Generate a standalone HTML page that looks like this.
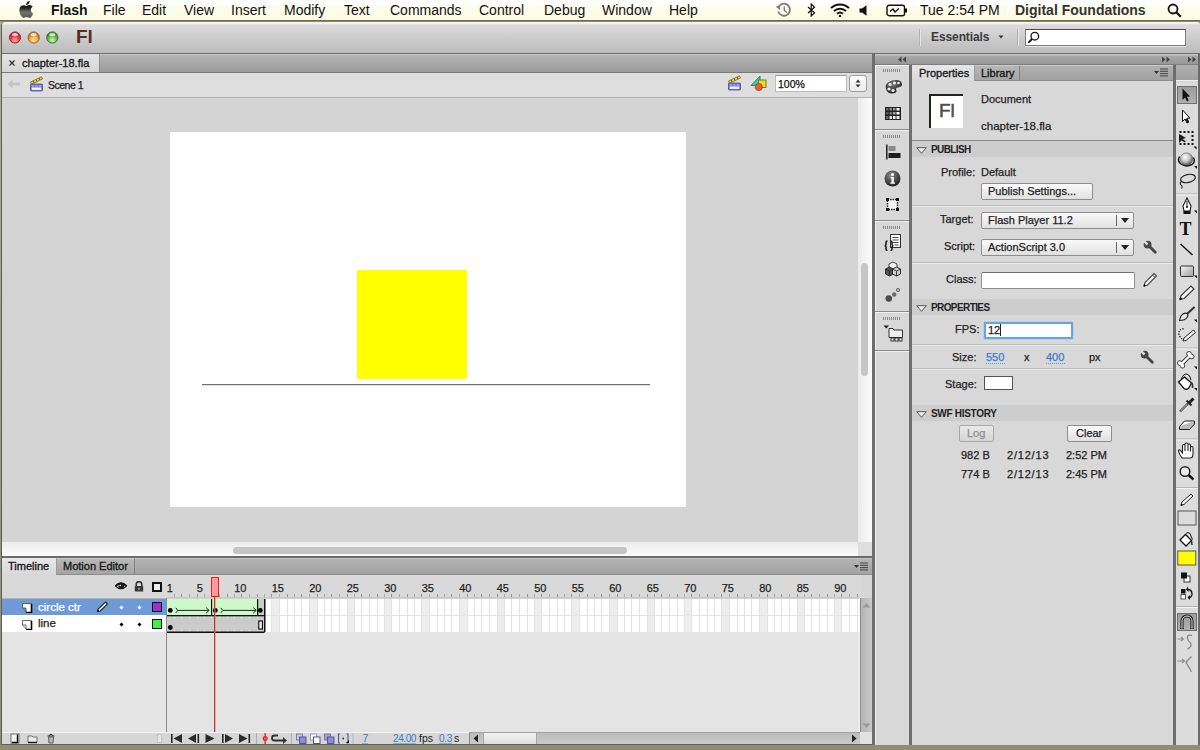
<!DOCTYPE html>
<html><head><meta charset="utf-8">
<style>
*{margin:0;padding:0;box-sizing:border-box}
html,body{width:1200px;height:750px;overflow:hidden}
body{position:relative;background:linear-gradient(#b3b192,#8f8d72);font-family:"Liberation Sans",sans-serif;color:#222}
.a{position:absolute}
.t{position:absolute;white-space:nowrap;line-height:1;-webkit-text-stroke:0.25px currentColor}
#menubar{left:0;top:0;width:1200px;height:21px;background:linear-gradient(#ffffff 0,#ffffff 18%,#fdfdec 35%,#fbfbe4 100%);border-bottom:1px solid #6e6a4e;box-shadow:0 1px 0 rgba(90,86,60,0.45)}
#menubar .m{position:absolute;top:2px;font-size:14px;color:#111;line-height:16px}
.light{position:absolute;width:12px;height:12px;border-radius:50%}
</style></head><body>
<!-- MENUBAR -->
<div id="menubar" class="a">
  <svg class="a" style="left:18.5px;top:1px" width="14.5" height="17" viewBox="0 0 814 1000"><defs><linearGradient id="gap" x1="0" y1="0" x2="0" y2="1"><stop offset="0" stop-color="#111"/><stop offset="0.4" stop-color="#222"/><stop offset="0.65" stop-color="#707070"/><stop offset="1" stop-color="#5a5a5a"/></linearGradient></defs><path fill="url(#gap)" d="M788.1 340.9c-5.8 4.5-108.2 62.2-108.2 190.5 0 148.4 130.3 200.9 134.2 202.2-.6 3.2-20.7 71.9-68.7 141.9-42.8 61.6-87.5 123.1-155.5 123.1s-85.5-39.5-164-39.5c-76.5 0-103.7 40.8-165.9 40.8s-105.6-57-155.5-127C46.7 790.7 0 663 0 541.8c0-194.4 126.4-297.5 250.8-297.5 66.1 0 121.2 43.4 162.7 43.4 39.5 0 101.1-46 176.3-46 28.5 0 130.9 2.600 198.3 99.2zm-234-181.5c31.1-36.9 53.1-88.1 53.1-139.3 0-7.1-.6-14.3-1.9-20.1-50.6 1.9-110.8 33.7-147.1 75.8-28.5 32.4-55.1 83.6-55.1 135.5 0 7.8 1.3 15.6 1.9 18.1 3.2.6 8.4 1.3 13.6 1.3 45.4 0 102.5-30.4 135.5-71.3z"/></svg>
  <div class="m" style="left:51px;font-weight:bold">Flash</div>
  <div class="m" style="left:103px">File</div>
  <div class="m" style="left:142px">Edit</div>
  <div class="m" style="left:184px">View</div>
  <div class="m" style="left:231px">Insert</div>
  <div class="m" style="left:284px">Modify</div>
  <div class="m" style="left:344px">Text</div>
  <div class="m" style="left:390px">Commands</div>
  <div class="m" style="left:479px">Control</div>
  <div class="m" style="left:544px">Debug</div>
  <div class="m" style="left:602px">Window</div>
  <div class="m" style="left:669px">Help</div>
  <div class="m" style="left:920px">Tue 2:54 PM</div>
  <div class="m" style="left:1015px;font-weight:bold;color:#333">Digital Foundations</div>
<svg class="a" style="left:775px;top:2px" width="17" height="16" viewBox="0 0 17 16"><path d="M3.2 9.5 A6 6 0 1 0 4.2 4" stroke="#7a7a7a" stroke-width="1.8" fill="none"/><path d="M0.8 4.8 L5.2 3 L5 8z" fill="#7a7a7a"/><path d="M9.3 4.5 V8.5 L12 10.5" stroke="#7a7a7a" stroke-width="1.4" fill="none"/></svg>
<svg class="a" style="left:807px;top:3px" width="9" height="14" viewBox="0 0 9 14"><path d="M1 4 L7.5 9.8 L4.2 13 V1 L7.5 4.2 L1 10" stroke="#111" stroke-width="1.2" fill="none" stroke-linejoin="miter"/></svg>
<svg class="a" style="left:830px;top:3px" width="20" height="14" viewBox="0 0 20 14"><path d="M1 5 A13 13 0 0 1 19 5" stroke="#111" stroke-width="2" fill="none"/><path d="M4 8 A9 9 0 0 1 16 8" stroke="#111" stroke-width="2" fill="none"/><path d="M7 10.8 A4.5 4.5 0 0 1 13 10.8" stroke="#111" stroke-width="2" fill="none"/><circle cx="10" cy="13" r="1.2" fill="#111"/></svg>
<svg class="a" style="left:859px;top:5px" width="9" height="11" viewBox="0 0 9 11"><path d="M0.5 3.5 H3 L7.5 0.2 V10.8 L3 7.5 H0.5z" fill="#111"/></svg>
<svg class="a" style="left:886px;top:4px" width="22" height="13" viewBox="0 0 22 13"><rect x="1" y="1.3" width="17.5" height="10.4" rx="2" fill="none" stroke="#111" stroke-width="1.4"/><rect x="19" y="4.5" width="2" height="4" fill="#111"/><path d="M4 7.5 L7 5 L9 8 L13 4.5" stroke="#111" stroke-width="1.4" fill="none"/></svg>
<svg class="a" style="left:1167px;top:3px" width="15" height="15" viewBox="0 0 15 15"><circle cx="6" cy="6" r="4.5" fill="none" stroke="#111" stroke-width="1.8"/><path d="M9.3 9.3 L13.8 13.8" stroke="#111" stroke-width="2.2"/></svg>

</div>
<!-- WINDOW FRAME -->
<div class="a" style="left:1px;top:22px;width:1199px;height:723px;background:#d6d6d6;border-left:1px solid #5c5c5c;border-bottom:1px solid #5c5c5c;border-radius:4px 4px 0 0"></div>
<!-- TITLEBAR -->
<div class="a" style="left:2px;top:22px;width:1198px;height:32px;background:linear-gradient(#f6f6f6 0,#f6f6f6 1px,#dcdcdc 3px,#c9c9c9 60%,#bcbcbc 100%);border-bottom:1px solid #6f6f6f;border-radius:4px 4px 0 0"></div>
<svg class="a" style="left:7px;top:29px" width="54" height="17" viewBox="0 0 54 17">
<defs>
<radialGradient id="lr" cx="50%" cy="75%" r="60%"><stop offset="0" stop-color="#ffb4b4"/><stop offset="0.6" stop-color="#f04048"/><stop offset="1" stop-color="#c0202a"/></radialGradient>
<radialGradient id="lo" cx="50%" cy="75%" r="60%"><stop offset="0" stop-color="#ffe8a8"/><stop offset="0.6" stop-color="#f2a83a"/><stop offset="1" stop-color="#c07818"/></radialGradient>
<radialGradient id="lg" cx="50%" cy="75%" r="60%"><stop offset="0" stop-color="#d4f8c0"/><stop offset="0.6" stop-color="#6cc050"/><stop offset="1" stop-color="#3a8a28"/></radialGradient>
</defs>
<circle cx="8" cy="8.5" r="5.6" fill="url(#lr)" stroke="#8c2a2a" stroke-width="0.9"/><ellipse cx="8" cy="5.6" rx="3" ry="1.6" fill="#fff" opacity="0.75"/>
<circle cx="26.7" cy="8.5" r="5.6" fill="url(#lo)" stroke="#8e5a1c" stroke-width="0.9"/><ellipse cx="26.7" cy="5.6" rx="3" ry="1.6" fill="#fff" opacity="0.75"/>
<circle cx="45.3" cy="8.5" r="5.6" fill="url(#lg)" stroke="#2e6a22" stroke-width="0.9"/><ellipse cx="45.3" cy="5.6" rx="3" ry="1.6" fill="#fff" opacity="0.75"/>
</svg>
<div class="t" style="left:76px;top:27px;font-size:19px;font-weight:bold;color:#5a2a26;-webkit-text-stroke:0">Fl</div>
<div class="a" style="left:919px;top:29px;width:1px;height:17px;background:#b2b2b2;box-shadow:1px 0 0 #e6e6e6"></div>
<div class="a" style="left:1017px;top:29px;width:1px;height:17px;background:#b2b2b2;box-shadow:1px 0 0 #e6e6e6"></div>
<div class="t" style="left:931px;top:31px;font-size:12px;font-weight:bold;color:#3a3a3a;letter-spacing:-0.1px;-webkit-text-stroke:0">Essentials</div>
<svg class="a" style="left:998px;top:35px" width="6" height="4" viewBox="0 0 6 4"><path d="M0.5 0.5 H5.5 L3 3.5z" fill="#333"/></svg>
<div class="a" style="left:1025px;top:29px;width:161px;height:17px;background:#fff;border:1px solid #7a7a7a;border-top-color:#4a4a4a;box-shadow:0 1px 0 rgba(255,255,255,0.6)"></div>
<svg class="a" style="left:1027px;top:31px" width="13" height="13" viewBox="0 0 13 13"><circle cx="7.8" cy="5.2" r="3.8" fill="none" stroke="#111" stroke-width="1.3"/><path d="M5 8 L1.2 11.8" stroke="#111" stroke-width="1.8"/></svg>


<!-- DOC TABS ROW -->
<div class="a" style="left:2px;top:54px;width:870px;height:19px;background:linear-gradient(#b4b4b4,#9c9c9c);border-bottom:1px solid #7a7a7a;border-top:1px solid #c8c8c8"></div>
<div class="a" style="left:2px;top:54px;width:98px;height:18px;background:linear-gradient(#e4e4e4,#d6d6d6);border-right:1px solid #8c8c8c"></div>
<svg class="a" style="left:9px;top:60px" width="6" height="6" viewBox="0 0 6 6"><path d="M0.5 0.5 L5.5 5.5 M5.5 0.5 L0.5 5.5" stroke="#333" stroke-width="1.2"/></svg>
<div class="t" style="left:22px;top:58px;font-size:11px;color:#1e1e1e;-webkit-text-stroke:0.35px #1e1e1e">chapter-18.fla</div>
<!-- SCENE BAR -->
<div class="a" style="left:2px;top:73px;width:870px;height:25px;background:#dedede;border-bottom:1px solid #b2b2b2"></div>
<svg class="a" style="left:7px;top:79px" width="14" height="10" viewBox="0 0 14 10"><path d="M5.5 0.5 L0.5 5 L5.5 9.5 V6.5 H13 V3.5 H5.5z" fill="#c4c4c4"/></svg>
<svg class="a" style="left:29px;top:76px" width="15" height="16" viewBox="0 0 15 16"><path d="M1.5 6 L12.5 0.8 L13.5 3 L2.5 8.2z" fill="#e8d830" stroke="#6a6010" stroke-width="0.7"/><path d="M4 4.8 L5 6.8 M7 3.4 L8 5.4 M10 2 L11 4" stroke="#444" stroke-width="0.9"/><rect x="1.5" y="8" width="12" height="7" rx="0.8" fill="#7a7ad0" stroke="#4a4a9a" stroke-width="0.8"/><rect x="2.8" y="11.5" width="9.4" height="2.4" fill="#f4f4ff"/><path d="M3 10 H5 M6.5 10 H8.5 M10 10 H12" stroke="#c8c8f0" stroke-width="0.9"/></svg>
<div class="t" style="left:48px;top:80px;font-size:10.5px;color:#1a1a1a;letter-spacing:-0.5px">Scene 1</div>
<svg class="a" style="left:727px;top:75px" width="15" height="16" viewBox="0 0 15 16"><path d="M1.5 6 L12.5 0.8 L13.5 3 L2.5 8.2z" fill="#e8d830" stroke="#6a6010" stroke-width="0.7"/><path d="M4 4.8 L5 6.8 M7 3.4 L8 5.4 M10 2 L11 4" stroke="#444" stroke-width="0.9"/><rect x="1.5" y="8" width="12" height="7" rx="0.8" fill="#7a7ad0" stroke="#4a4a9a" stroke-width="0.8"/><rect x="2.8" y="11.5" width="9.4" height="2.4" fill="#f4f4ff"/><path d="M3 10 H5 M6.5 10 H8.5 M10 10 H12" stroke="#c8c8f0" stroke-width="0.9"/></svg>
<svg class="a" style="left:750px;top:75px" width="17" height="16" viewBox="0 0 17 16"><path d="M1 10.5 L10 1.2 V10.5z" fill="#3cd0a0" stroke="#187860" stroke-width="0.9"/><rect x="8.5" y="5" width="7.5" height="7.5" fill="#e0e030" stroke="#707010" stroke-width="0.9"/><circle cx="8.8" cy="12" r="3.6" fill="#f05a28" stroke="#a83010" stroke-width="0.7"/></svg>
<div class="a" style="left:775px;top:75px;width:72px;height:17px;background:#fff;border:1px solid #bcbcbc;border-top-color:#9a9a9a"></div>
<div class="t" style="left:778px;top:79px;font-size:10.5px;color:#111">100%</div>
<div class="a" style="left:849px;top:75px;width:18px;height:17px;background:linear-gradient(#fdfdfd,#ececec);border:1px solid #9e9e9e;border-radius:3px"></div>
<svg class="a" style="left:855px;top:79px" width="6" height="9" viewBox="0 0 6 9"><path d="M0.5 3.5 L3 0.5 L5.5 3.5z M0.5 5.5 L3 8.5 L5.5 5.5z" fill="#333"/></svg>

<!-- STAGE AREA -->
<div class="a" style="left:2px;top:98px;width:856px;height:444px;background:#d4d4d4"></div>
<div class="a" style="left:170px;top:132px;width:516px;height:375px;background:#fff"></div>
<div class="a" style="left:357px;top:270px;width:110px;height:109px;background:#ffff00"></div>
<div class="a" style="left:202px;top:384px;width:448px;height:1px;background:#707070;box-shadow:0 1px 0 rgba(0,0,0,0.12)"></div>
<!-- stage scrollbars -->
<div class="a" style="left:858px;top:98px;width:14px;height:444px;background:linear-gradient(90deg,#ececec,#fbfbfb)"></div>
<div class="a" style="left:861px;top:263px;width:7px;height:113px;background:#c6c6c6;border-radius:4px"></div>
<div class="a" style="left:2px;top:542px;width:856px;height:14px;background:linear-gradient(#ececec,#fbfbfb)"></div>
<div class="a" style="left:233px;top:547px;width:394px;height:7px;background:#c4c4c4;border-radius:4px"></div>
<div class="a" style="left:858px;top:542px;width:14px;height:14px;background:#dedede"></div>
<div class="a" style="left:2px;top:556px;width:870px;height:2px;background:#6c6c6c"></div>

<!-- TIMELINE TABS -->
<div class="a" style="left:2px;top:558px;width:870px;height:17px;background:linear-gradient(#b4b4b4,#a2a2a2);border-bottom:1px solid #8e8e8e;border-top:1px solid #c6c6c6"></div>
<div class="a" style="left:2px;top:558px;width:54px;height:17px;background:linear-gradient(#e8e8e8,#d8d8d8)"></div>
<div class="a" style="left:56px;top:558px;width:79px;height:17px;background:linear-gradient(#b8b8b8,#a4a4a4);border-right:1px solid #828282;border-left:1px solid #9a9a9a;border-bottom:1px solid #8e8e8e;border-top:1px solid #cacaca"></div>
<div class="t" style="left:8px;top:561px;font-size:11px;color:#1a1a1a;-webkit-text-stroke:0.35px #1a1a1a">Timeline</div>
<div class="t" style="left:63px;top:561px;font-size:11px;color:#1a1a1a;-webkit-text-stroke:0.35px #1a1a1a">Motion Editor</div>
<svg class="a" style="left:854px;top:562px" width="15" height="9" viewBox="0 0 15 9"><path d="M0 3 L5 3 L2.5 6z" fill="#333"/><rect x="6" y="0.5" width="8" height="1" fill="#444"/><rect x="6" y="2.8" width="8" height="1" fill="#444"/><rect x="6" y="5.1" width="8" height="1" fill="#444"/><rect x="6" y="7.4" width="8" height="1" fill="#444"/></svg>
<!-- LAYER HEADER -->
<div class="a" style="left:2px;top:575px;width:165px;height:24px;background:#d8d8d8;border-bottom:1px solid #b9b3a8"></div>
<svg class="a" style="left:115px;top:582px" width="12" height="9" viewBox="0 0 12 9"><path d="M0.5 4 Q6 -1.5 11.5 4 Q6 9.5 0.5 4z" fill="#f0f0f0" stroke="#1a1a1a" stroke-width="1.1"/><path d="M0.5 4 Q6 -1.5 11.5 4" fill="none" stroke="#111" stroke-width="1.8"/><circle cx="6.3" cy="4.3" r="2.8" fill="#1a1a1a"/><circle cx="5.3" cy="3.5" r="0.8" fill="#fff"/></svg>
<svg class="a" style="left:134px;top:581px" width="10" height="11" viewBox="0 0 10 11"><path d="M2.2 5 V3.5 A2.8 2.8 0 0 1 7.8 3.5 V5" stroke="#333" stroke-width="1.5" fill="none"/><rect x="0.8" y="5" width="8.4" height="5.5" rx="0.5" fill="#3a3a3a"/><rect x="4.3" y="6.8" width="1.4" height="2.2" fill="#aaa"/></svg>
<div class="a" style="left:152px;top:582px;width:10px;height:10px;border:2px solid #111;background:#eee"></div>
<!-- LAYER ROWS -->
<div class="a" style="left:2px;top:599px;width:165px;height:16px;background:#6e9bd8"></div>
<div class="a" style="left:2px;top:615px;width:165px;height:17px;background:#ffffff"></div>
<div class="a" style="left:2px;top:632px;width:165px;height:100px;background:#e4e4e4"></div>
<svg class="a" style="left:22px;top:603px" width="11" height="10" viewBox="0 0 11 10"><path d="M0.5 0.5 H9.5 V9.5 H4 V5 H0.5z" fill="#fff" stroke="#444" stroke-width="0.8"/><path d="M9.5 1 V9.5 H4" stroke="#000" stroke-width="1.6" fill="none"/><path d="M0.5 5 L4 9" stroke="#666" stroke-width="0.8"/></svg>
<svg class="a" style="left:22px;top:620px" width="11" height="10" viewBox="0 0 11 10"><path d="M0.5 0.5 H9.5 V9.5 H4 V5 H0.5z" fill="#fff" stroke="#444" stroke-width="0.8"/><path d="M9.5 1 V9.5 H4" stroke="#000" stroke-width="1.6" fill="none"/><path d="M0.5 5 L4 9" stroke="#666" stroke-width="0.8"/></svg>
<div class="t" style="left:38px;top:602px;font-size:11.5px;color:#fff">circle ctr</div>
<div class="t" style="left:38px;top:618px;font-size:11.5px;color:#222">line</div>
<svg class="a" style="left:96px;top:601px" width="13" height="12" viewBox="0 0 13 12"><path d="M1.5 10.5 L2.2 8 L9.5 1 L11.5 3 L4.2 10z" fill="#f4f4f4" stroke="#222" stroke-width="1.1"/><path d="M1.5 10.5 L2.6 9.4" stroke="#000" stroke-width="1.5"/></svg>
<svg class="a" style="left:118px;top:604px" width="7" height="7" viewBox="0 0 7 7"><path d="M3.5 1.5 L5.5 3.5 L3.5 5.5 L1.5 3.5z" fill="#fff"/></svg>
<svg class="a" style="left:136px;top:604px" width="7" height="7" viewBox="0 0 7 7"><path d="M3.5 1.5 L5.5 3.5 L3.5 5.5 L1.5 3.5z" fill="#fff"/></svg>
<svg class="a" style="left:118px;top:621px" width="7" height="7" viewBox="0 0 7 7"><path d="M3.5 1.5 L5.5 3.5 L3.5 5.5 L1.5 3.5z" fill="#000"/></svg>
<svg class="a" style="left:136px;top:621px" width="7" height="7" viewBox="0 0 7 7"><path d="M3.5 1.5 L5.5 3.5 L3.5 5.5 L1.5 3.5z" fill="#000"/></svg>
<div class="a" style="left:152px;top:602px;width:10px;height:10px;border:1px solid #111;background:#9b30cf"></div>
<div class="a" style="left:152px;top:619px;width:10px;height:10px;border:1px solid #111;background:#44ee44"></div>
<div class="a" style="left:166px;top:598px;width:1px;height:146px;background:#8c8c8c"></div>
<!-- FRAMES -->
<svg class="a" style="left:167px;top:575px" width="694" height="157" viewBox="0 0 694 157" font-family="Liberation Sans"><rect x="0" y="0" width="694" height="23" fill="#d9d9d9"/><rect x="0" y="23.5" width="693" height="33.5" fill="#ffffff"/><rect x="30" y="23.5" width="8" height="33.5" fill="#ededed"/><rect x="67" y="23.5" width="8" height="33.5" fill="#ededed"/><rect x="104" y="23.5" width="8" height="33.5" fill="#ededed"/><rect x="142" y="23.5" width="8" height="33.5" fill="#ededed"/><rect x="180" y="23.5" width="8" height="33.5" fill="#ededed"/><rect x="217" y="23.5" width="8" height="33.5" fill="#ededed"/><rect x="254" y="23.5" width="8" height="33.5" fill="#ededed"/><rect x="292" y="23.5" width="8" height="33.5" fill="#ededed"/><rect x="330" y="23.5" width="8" height="33.5" fill="#ededed"/><rect x="367" y="23.5" width="8" height="33.5" fill="#ededed"/><rect x="404" y="23.5" width="8" height="33.5" fill="#ededed"/><rect x="442" y="23.5" width="8" height="33.5" fill="#ededed"/><rect x="480" y="23.5" width="8" height="33.5" fill="#ededed"/><rect x="517" y="23.5" width="8" height="33.5" fill="#ededed"/><rect x="554" y="23.5" width="8" height="33.5" fill="#ededed"/><rect x="592" y="23.5" width="8" height="33.5" fill="#ededed"/><rect x="630" y="23.5" width="8" height="33.5" fill="#ededed"/><rect x="667" y="23.5" width="8" height="33.5" fill="#ededed"/><rect x="7" y="23.5" width="1" height="33.5" fill="#e2e2e2"/><rect x="14" y="23.5" width="1" height="33.5" fill="#e2e2e2"/><rect x="22" y="23.5" width="1" height="33.5" fill="#e2e2e2"/><rect x="30" y="23.5" width="1" height="33.5" fill="#e2e2e2"/><rect x="37" y="23.5" width="1" height="33.5" fill="#e2e2e2"/><rect x="44" y="23.5" width="1" height="33.5" fill="#e2e2e2"/><rect x="52" y="23.5" width="1" height="33.5" fill="#e2e2e2"/><rect x="60" y="23.5" width="1" height="33.5" fill="#e2e2e2"/><rect x="67" y="23.5" width="1" height="33.5" fill="#e2e2e2"/><rect x="74" y="23.5" width="1" height="33.5" fill="#e2e2e2"/><rect x="82" y="23.5" width="1" height="33.5" fill="#e2e2e2"/><rect x="90" y="23.5" width="1" height="33.5" fill="#e2e2e2"/><rect x="97" y="23.5" width="1" height="33.5" fill="#e2e2e2"/><rect x="104" y="23.5" width="1" height="33.5" fill="#e2e2e2"/><rect x="112" y="23.5" width="1" height="33.5" fill="#e2e2e2"/><rect x="120" y="23.5" width="1" height="33.5" fill="#e2e2e2"/><rect x="127" y="23.5" width="1" height="33.5" fill="#e2e2e2"/><rect x="134" y="23.5" width="1" height="33.5" fill="#e2e2e2"/><rect x="142" y="23.5" width="1" height="33.5" fill="#e2e2e2"/><rect x="150" y="23.5" width="1" height="33.5" fill="#e2e2e2"/><rect x="157" y="23.5" width="1" height="33.5" fill="#e2e2e2"/><rect x="164" y="23.5" width="1" height="33.5" fill="#e2e2e2"/><rect x="172" y="23.5" width="1" height="33.5" fill="#e2e2e2"/><rect x="180" y="23.5" width="1" height="33.5" fill="#e2e2e2"/><rect x="187" y="23.5" width="1" height="33.5" fill="#e2e2e2"/><rect x="194" y="23.5" width="1" height="33.5" fill="#e2e2e2"/><rect x="202" y="23.5" width="1" height="33.5" fill="#e2e2e2"/><rect x="210" y="23.5" width="1" height="33.5" fill="#e2e2e2"/><rect x="217" y="23.5" width="1" height="33.5" fill="#e2e2e2"/><rect x="224" y="23.5" width="1" height="33.5" fill="#e2e2e2"/><rect x="232" y="23.5" width="1" height="33.5" fill="#e2e2e2"/><rect x="240" y="23.5" width="1" height="33.5" fill="#e2e2e2"/><rect x="247" y="23.5" width="1" height="33.5" fill="#e2e2e2"/><rect x="254" y="23.5" width="1" height="33.5" fill="#e2e2e2"/><rect x="262" y="23.5" width="1" height="33.5" fill="#e2e2e2"/><rect x="270" y="23.5" width="1" height="33.5" fill="#e2e2e2"/><rect x="277" y="23.5" width="1" height="33.5" fill="#e2e2e2"/><rect x="284" y="23.5" width="1" height="33.5" fill="#e2e2e2"/><rect x="292" y="23.5" width="1" height="33.5" fill="#e2e2e2"/><rect x="300" y="23.5" width="1" height="33.5" fill="#e2e2e2"/><rect x="307" y="23.5" width="1" height="33.5" fill="#e2e2e2"/><rect x="314" y="23.5" width="1" height="33.5" fill="#e2e2e2"/><rect x="322" y="23.5" width="1" height="33.5" fill="#e2e2e2"/><rect x="330" y="23.5" width="1" height="33.5" fill="#e2e2e2"/><rect x="337" y="23.5" width="1" height="33.5" fill="#e2e2e2"/><rect x="344" y="23.5" width="1" height="33.5" fill="#e2e2e2"/><rect x="352" y="23.5" width="1" height="33.5" fill="#e2e2e2"/><rect x="360" y="23.5" width="1" height="33.5" fill="#e2e2e2"/><rect x="367" y="23.5" width="1" height="33.5" fill="#e2e2e2"/><rect x="374" y="23.5" width="1" height="33.5" fill="#e2e2e2"/><rect x="382" y="23.5" width="1" height="33.5" fill="#e2e2e2"/><rect x="390" y="23.5" width="1" height="33.5" fill="#e2e2e2"/><rect x="397" y="23.5" width="1" height="33.5" fill="#e2e2e2"/><rect x="404" y="23.5" width="1" height="33.5" fill="#e2e2e2"/><rect x="412" y="23.5" width="1" height="33.5" fill="#e2e2e2"/><rect x="420" y="23.5" width="1" height="33.5" fill="#e2e2e2"/><rect x="427" y="23.5" width="1" height="33.5" fill="#e2e2e2"/><rect x="434" y="23.5" width="1" height="33.5" fill="#e2e2e2"/><rect x="442" y="23.5" width="1" height="33.5" fill="#e2e2e2"/><rect x="450" y="23.5" width="1" height="33.5" fill="#e2e2e2"/><rect x="457" y="23.5" width="1" height="33.5" fill="#e2e2e2"/><rect x="464" y="23.5" width="1" height="33.5" fill="#e2e2e2"/><rect x="472" y="23.5" width="1" height="33.5" fill="#e2e2e2"/><rect x="480" y="23.5" width="1" height="33.5" fill="#e2e2e2"/><rect x="487" y="23.5" width="1" height="33.5" fill="#e2e2e2"/><rect x="494" y="23.5" width="1" height="33.5" fill="#e2e2e2"/><rect x="502" y="23.5" width="1" height="33.5" fill="#e2e2e2"/><rect x="510" y="23.5" width="1" height="33.5" fill="#e2e2e2"/><rect x="517" y="23.5" width="1" height="33.5" fill="#e2e2e2"/><rect x="524" y="23.5" width="1" height="33.5" fill="#e2e2e2"/><rect x="532" y="23.5" width="1" height="33.5" fill="#e2e2e2"/><rect x="540" y="23.5" width="1" height="33.5" fill="#e2e2e2"/><rect x="547" y="23.5" width="1" height="33.5" fill="#e2e2e2"/><rect x="554" y="23.5" width="1" height="33.5" fill="#e2e2e2"/><rect x="562" y="23.5" width="1" height="33.5" fill="#e2e2e2"/><rect x="570" y="23.5" width="1" height="33.5" fill="#e2e2e2"/><rect x="577" y="23.5" width="1" height="33.5" fill="#e2e2e2"/><rect x="584" y="23.5" width="1" height="33.5" fill="#e2e2e2"/><rect x="592" y="23.5" width="1" height="33.5" fill="#e2e2e2"/><rect x="600" y="23.5" width="1" height="33.5" fill="#e2e2e2"/><rect x="607" y="23.5" width="1" height="33.5" fill="#e2e2e2"/><rect x="614" y="23.5" width="1" height="33.5" fill="#e2e2e2"/><rect x="622" y="23.5" width="1" height="33.5" fill="#e2e2e2"/><rect x="630" y="23.5" width="1" height="33.5" fill="#e2e2e2"/><rect x="637" y="23.5" width="1" height="33.5" fill="#e2e2e2"/><rect x="644" y="23.5" width="1" height="33.5" fill="#e2e2e2"/><rect x="652" y="23.5" width="1" height="33.5" fill="#e2e2e2"/><rect x="660" y="23.5" width="1" height="33.5" fill="#e2e2e2"/><rect x="667" y="23.5" width="1" height="33.5" fill="#e2e2e2"/><rect x="674" y="23.5" width="1" height="33.5" fill="#e2e2e2"/><rect x="682" y="23.5" width="1" height="33.5" fill="#e2e2e2"/><rect x="690" y="23.5" width="1" height="33.5" fill="#e2e2e2"/><rect x="0" y="40" width="693" height="1" fill="#e4e4e4"/><rect x="0" y="57" width="693" height="100" fill="#e4e4e4"/><rect x="7" y="19" width="1" height="3" fill="#8a8a8a" opacity="0.6"/><rect x="14" y="19" width="1" height="3" fill="#8a8a8a" opacity="0.9"/><rect x="22" y="19" width="1" height="3" fill="#8a8a8a" opacity="0.6"/><rect x="30" y="19" width="1" height="3" fill="#8a8a8a" opacity="0.9"/><rect x="37" y="19" width="1" height="3" fill="#8a8a8a" opacity="0.6"/><rect x="44" y="19" width="1" height="3" fill="#8a8a8a" opacity="0.9"/><rect x="52" y="19" width="1" height="3" fill="#8a8a8a" opacity="0.6"/><rect x="60" y="19" width="1" height="3" fill="#8a8a8a" opacity="0.9"/><rect x="67" y="19" width="1" height="3" fill="#8a8a8a" opacity="0.6"/><rect x="74" y="19" width="1" height="3" fill="#8a8a8a" opacity="0.9"/><rect x="82" y="19" width="1" height="3" fill="#8a8a8a" opacity="0.6"/><rect x="90" y="19" width="1" height="3" fill="#8a8a8a" opacity="0.9"/><rect x="97" y="19" width="1" height="3" fill="#8a8a8a" opacity="0.6"/><rect x="104" y="19" width="1" height="3" fill="#8a8a8a" opacity="0.9"/><rect x="112" y="19" width="1" height="3" fill="#8a8a8a" opacity="0.6"/><rect x="120" y="19" width="1" height="3" fill="#8a8a8a" opacity="0.9"/><rect x="127" y="19" width="1" height="3" fill="#8a8a8a" opacity="0.6"/><rect x="134" y="19" width="1" height="3" fill="#8a8a8a" opacity="0.9"/><rect x="142" y="19" width="1" height="3" fill="#8a8a8a" opacity="0.6"/><rect x="150" y="19" width="1" height="3" fill="#8a8a8a" opacity="0.9"/><rect x="157" y="19" width="1" height="3" fill="#8a8a8a" opacity="0.6"/><rect x="164" y="19" width="1" height="3" fill="#8a8a8a" opacity="0.9"/><rect x="172" y="19" width="1" height="3" fill="#8a8a8a" opacity="0.6"/><rect x="180" y="19" width="1" height="3" fill="#8a8a8a" opacity="0.9"/><rect x="187" y="19" width="1" height="3" fill="#8a8a8a" opacity="0.6"/><rect x="194" y="19" width="1" height="3" fill="#8a8a8a" opacity="0.9"/><rect x="202" y="19" width="1" height="3" fill="#8a8a8a" opacity="0.6"/><rect x="210" y="19" width="1" height="3" fill="#8a8a8a" opacity="0.9"/><rect x="217" y="19" width="1" height="3" fill="#8a8a8a" opacity="0.6"/><rect x="224" y="19" width="1" height="3" fill="#8a8a8a" opacity="0.9"/><rect x="232" y="19" width="1" height="3" fill="#8a8a8a" opacity="0.6"/><rect x="240" y="19" width="1" height="3" fill="#8a8a8a" opacity="0.9"/><rect x="247" y="19" width="1" height="3" fill="#8a8a8a" opacity="0.6"/><rect x="254" y="19" width="1" height="3" fill="#8a8a8a" opacity="0.9"/><rect x="262" y="19" width="1" height="3" fill="#8a8a8a" opacity="0.6"/><rect x="270" y="19" width="1" height="3" fill="#8a8a8a" opacity="0.9"/><rect x="277" y="19" width="1" height="3" fill="#8a8a8a" opacity="0.6"/><rect x="284" y="19" width="1" height="3" fill="#8a8a8a" opacity="0.9"/><rect x="292" y="19" width="1" height="3" fill="#8a8a8a" opacity="0.6"/><rect x="300" y="19" width="1" height="3" fill="#8a8a8a" opacity="0.9"/><rect x="307" y="19" width="1" height="3" fill="#8a8a8a" opacity="0.6"/><rect x="314" y="19" width="1" height="3" fill="#8a8a8a" opacity="0.9"/><rect x="322" y="19" width="1" height="3" fill="#8a8a8a" opacity="0.6"/><rect x="330" y="19" width="1" height="3" fill="#8a8a8a" opacity="0.9"/><rect x="337" y="19" width="1" height="3" fill="#8a8a8a" opacity="0.6"/><rect x="344" y="19" width="1" height="3" fill="#8a8a8a" opacity="0.9"/><rect x="352" y="19" width="1" height="3" fill="#8a8a8a" opacity="0.6"/><rect x="360" y="19" width="1" height="3" fill="#8a8a8a" opacity="0.9"/><rect x="367" y="19" width="1" height="3" fill="#8a8a8a" opacity="0.6"/><rect x="374" y="19" width="1" height="3" fill="#8a8a8a" opacity="0.9"/><rect x="382" y="19" width="1" height="3" fill="#8a8a8a" opacity="0.6"/><rect x="390" y="19" width="1" height="3" fill="#8a8a8a" opacity="0.9"/><rect x="397" y="19" width="1" height="3" fill="#8a8a8a" opacity="0.6"/><rect x="404" y="19" width="1" height="3" fill="#8a8a8a" opacity="0.9"/><rect x="412" y="19" width="1" height="3" fill="#8a8a8a" opacity="0.6"/><rect x="420" y="19" width="1" height="3" fill="#8a8a8a" opacity="0.9"/><rect x="427" y="19" width="1" height="3" fill="#8a8a8a" opacity="0.6"/><rect x="434" y="19" width="1" height="3" fill="#8a8a8a" opacity="0.9"/><rect x="442" y="19" width="1" height="3" fill="#8a8a8a" opacity="0.6"/><rect x="450" y="19" width="1" height="3" fill="#8a8a8a" opacity="0.9"/><rect x="457" y="19" width="1" height="3" fill="#8a8a8a" opacity="0.6"/><rect x="464" y="19" width="1" height="3" fill="#8a8a8a" opacity="0.9"/><rect x="472" y="19" width="1" height="3" fill="#8a8a8a" opacity="0.6"/><rect x="480" y="19" width="1" height="3" fill="#8a8a8a" opacity="0.9"/><rect x="487" y="19" width="1" height="3" fill="#8a8a8a" opacity="0.6"/><rect x="494" y="19" width="1" height="3" fill="#8a8a8a" opacity="0.9"/><rect x="502" y="19" width="1" height="3" fill="#8a8a8a" opacity="0.6"/><rect x="510" y="19" width="1" height="3" fill="#8a8a8a" opacity="0.9"/><rect x="517" y="19" width="1" height="3" fill="#8a8a8a" opacity="0.6"/><rect x="524" y="19" width="1" height="3" fill="#8a8a8a" opacity="0.9"/><rect x="532" y="19" width="1" height="3" fill="#8a8a8a" opacity="0.6"/><rect x="540" y="19" width="1" height="3" fill="#8a8a8a" opacity="0.9"/><rect x="547" y="19" width="1" height="3" fill="#8a8a8a" opacity="0.6"/><rect x="554" y="19" width="1" height="3" fill="#8a8a8a" opacity="0.9"/><rect x="562" y="19" width="1" height="3" fill="#8a8a8a" opacity="0.6"/><rect x="570" y="19" width="1" height="3" fill="#8a8a8a" opacity="0.9"/><rect x="577" y="19" width="1" height="3" fill="#8a8a8a" opacity="0.6"/><rect x="584" y="19" width="1" height="3" fill="#8a8a8a" opacity="0.9"/><rect x="592" y="19" width="1" height="3" fill="#8a8a8a" opacity="0.6"/><rect x="600" y="19" width="1" height="3" fill="#8a8a8a" opacity="0.9"/><rect x="607" y="19" width="1" height="3" fill="#8a8a8a" opacity="0.6"/><rect x="614" y="19" width="1" height="3" fill="#8a8a8a" opacity="0.9"/><rect x="622" y="19" width="1" height="3" fill="#8a8a8a" opacity="0.6"/><rect x="630" y="19" width="1" height="3" fill="#8a8a8a" opacity="0.9"/><rect x="637" y="19" width="1" height="3" fill="#8a8a8a" opacity="0.6"/><rect x="644" y="19" width="1" height="3" fill="#8a8a8a" opacity="0.9"/><rect x="652" y="19" width="1" height="3" fill="#8a8a8a" opacity="0.6"/><rect x="660" y="19" width="1" height="3" fill="#8a8a8a" opacity="0.9"/><rect x="667" y="19" width="1" height="3" fill="#8a8a8a" opacity="0.6"/><rect x="674" y="19" width="1" height="3" fill="#8a8a8a" opacity="0.9"/><rect x="682" y="19" width="1" height="3" fill="#8a8a8a" opacity="0.6"/><rect x="690" y="19" width="1" height="3" fill="#8a8a8a" opacity="0.9"/><rect x="0" y="22.5" width="693" height="1" fill="#b8b8b8"/><text x="-0.3" y="17" font-size="11" fill="#1e1e1e" stroke="#1e1e1e" stroke-width="0.25">1</text><text x="29.7" y="17" font-size="11" fill="#1e1e1e" stroke="#1e1e1e" stroke-width="0.25">5</text><text x="67.2" y="17" font-size="11" fill="#1e1e1e" stroke="#1e1e1e" stroke-width="0.25">10</text><text x="104.7" y="17" font-size="11" fill="#1e1e1e" stroke="#1e1e1e" stroke-width="0.25">15</text><text x="142.2" y="17" font-size="11" fill="#1e1e1e" stroke="#1e1e1e" stroke-width="0.25">20</text><text x="179.7" y="17" font-size="11" fill="#1e1e1e" stroke="#1e1e1e" stroke-width="0.25">25</text><text x="217.2" y="17" font-size="11" fill="#1e1e1e" stroke="#1e1e1e" stroke-width="0.25">30</text><text x="254.7" y="17" font-size="11" fill="#1e1e1e" stroke="#1e1e1e" stroke-width="0.25">35</text><text x="292.2" y="17" font-size="11" fill="#1e1e1e" stroke="#1e1e1e" stroke-width="0.25">40</text><text x="329.7" y="17" font-size="11" fill="#1e1e1e" stroke="#1e1e1e" stroke-width="0.25">45</text><text x="367.2" y="17" font-size="11" fill="#1e1e1e" stroke="#1e1e1e" stroke-width="0.25">50</text><text x="404.7" y="17" font-size="11" fill="#1e1e1e" stroke="#1e1e1e" stroke-width="0.25">55</text><text x="442.2" y="17" font-size="11" fill="#1e1e1e" stroke="#1e1e1e" stroke-width="0.25">60</text><text x="479.7" y="17" font-size="11" fill="#1e1e1e" stroke="#1e1e1e" stroke-width="0.25">65</text><text x="517.2" y="17" font-size="11" fill="#1e1e1e" stroke="#1e1e1e" stroke-width="0.25">70</text><text x="554.7" y="17" font-size="11" fill="#1e1e1e" stroke="#1e1e1e" stroke-width="0.25">75</text><text x="592.2" y="17" font-size="11" fill="#1e1e1e" stroke="#1e1e1e" stroke-width="0.25">80</text><text x="629.7" y="17" font-size="11" fill="#1e1e1e" stroke="#1e1e1e" stroke-width="0.25">85</text><text x="667.2" y="17" font-size="11" fill="#1e1e1e" stroke="#1e1e1e" stroke-width="0.25">90</text><rect x="0" y="24" width="90.0" height="16" fill="#cdf9c9"/><rect x="90.0" y="24" width="7.5" height="16" fill="#cccccc"/><rect x="0" y="41" width="97.5" height="16" fill="#cbcbcb"/><rect x="44" y="24" width="1.2" height="16" fill="#111"/><rect x="90" y="24" width="1.2" height="16" fill="#111"/><rect x="97" y="24" width="1.5" height="33" fill="#111"/><rect x="0" y="40" width="97.5" height="1.3" fill="#111"/><rect x="0" y="56.5" width="97.5" height="1.5" fill="#111"/><rect x="7" y="42" width="1" height="1" fill="#f4f4f4"/><rect x="7" y="55" width="1" height="1" fill="#f4f4f4"/><rect x="14" y="42" width="1" height="1" fill="#f4f4f4"/><rect x="14" y="55" width="1" height="1" fill="#f4f4f4"/><rect x="22" y="42" width="1" height="1" fill="#f4f4f4"/><rect x="22" y="55" width="1" height="1" fill="#f4f4f4"/><rect x="30" y="42" width="1" height="1" fill="#f4f4f4"/><rect x="30" y="55" width="1" height="1" fill="#f4f4f4"/><rect x="37" y="42" width="1" height="1" fill="#f4f4f4"/><rect x="37" y="55" width="1" height="1" fill="#f4f4f4"/><rect x="44" y="42" width="1" height="1" fill="#f4f4f4"/><rect x="44" y="55" width="1" height="1" fill="#f4f4f4"/><rect x="52" y="42" width="1" height="1" fill="#f4f4f4"/><rect x="52" y="55" width="1" height="1" fill="#f4f4f4"/><rect x="60" y="42" width="1" height="1" fill="#f4f4f4"/><rect x="60" y="55" width="1" height="1" fill="#f4f4f4"/><rect x="67" y="42" width="1" height="1" fill="#f4f4f4"/><rect x="67" y="55" width="1" height="1" fill="#f4f4f4"/><rect x="74" y="42" width="1" height="1" fill="#f4f4f4"/><rect x="74" y="55" width="1" height="1" fill="#f4f4f4"/><rect x="82" y="42" width="1" height="1" fill="#f4f4f4"/><rect x="82" y="55" width="1" height="1" fill="#f4f4f4"/><rect x="90" y="42" width="1" height="1" fill="#f4f4f4"/><rect x="90" y="55" width="1" height="1" fill="#f4f4f4"/><circle cx="3.3" cy="35.4" r="2.4" fill="#000"/><circle cx="48.3" cy="35.4" r="2.4" fill="#000"/><circle cx="93.3" cy="35.4" r="2.4" fill="#000"/><circle cx="3.3" cy="52.5" r="2.4" fill="#000"/><rect x="91.8" y="46" width="3.6" height="8" fill="#fff" stroke="#111" stroke-width="1.2"/><path d="M8.8 32.9 L10.8 35.4 L8.8 37.9 M10.8 35.4 L42.1 35.4 M39.1 32.6 L42.1 35.4 L39.1 38.199999999999996" stroke="#222" stroke-width="1" fill="none"/><path d="M53.8 32.9 L55.8 35.4 L53.8 37.9 M55.8 35.4 L89.2 35.4 M86.2 32.6 L89.2 35.4 L86.2 38.199999999999996" stroke="#222" stroke-width="1" fill="none"/></svg>
<!-- PLAYHEAD -->
<div class="a" style="left:211px;top:577px;width:8px;height:20px;background:#ff9a9a;border:1.5px solid #e02222"></div>
<div class="a" style="left:214px;top:597px;width:1px;height:135px;background:#d42a2a;box-shadow:1px 0 0 rgba(230,120,120,0.5)"></div>
<!-- TL V SCROLLBAR -->
<div class="a" style="left:859px;top:598px;width:1px;height:134px;background:#f6f6f6"></div>
<div class="a" style="left:860px;top:598px;width:12px;height:134px;background:linear-gradient(90deg,#b4b4b4,#cacaca);border-left:1px solid #8a8a8a"></div>
<svg class="a" style="left:862px;top:602px" width="9" height="6" viewBox="0 0 9 6"><path d="M0.5 5.5 L4.5 1 L8.5 5.5z" fill="#9a9a9a"/></svg>
<svg class="a" style="left:862px;top:723px" width="9" height="6" viewBox="0 0 9 6"><path d="M0.5 0.5 L4.5 5 L8.5 0.5z" fill="#9a9a9a"/></svg>
<!-- BOTTOM TOOLBAR -->
<div class="a" style="left:2px;top:732px;width:858px;height:12px;background:#d6d6d6;border-top:1px solid #f2f2f2"></div>
<div class="a" style="left:860px;top:732px;width:12px;height:12px;background:#e2e2e2"></div>
<svg class="a" style="left:10px;top:733px" width="48" height="11" viewBox="0 0 48 11"><rect x="1" y="1" width="8" height="9" fill="#f4f4f4" stroke="#555" stroke-width="0.8"/><path d="M7.5 1.5 V9.5 H2" stroke="#000" stroke-width="1.4" fill="none"/><path d="M18 3 H22 L23 4 H27 V9.5 H18z" fill="#eaeaea" stroke="#555" stroke-width="0.8"/><path d="M18 9.5 H27" stroke="#111" stroke-width="1.4"/><path d="M37.5 3 H44.5 M39 3 L40 1.5 H42 L43 3" stroke="#333" stroke-width="1" fill="#ddd"/><path d="M38.5 4 H43.5 L43 10 H39z" fill="#bbb" stroke="#444" stroke-width="0.8"/></svg>
<div class="a" style="left:157px;top:734px;width:5px;height:9px;background:#e6e6e6;border:1px solid #c4c4c4"></div>
<svg class="a" style="left:168px;top:733px" width="300" height="11" viewBox="0 0 300 11" font-family="Liberation Sans">
  <g fill="#2a2a2a">
    <rect x="3" y="1" width="1.6" height="9"/><path d="M14 1 L5.5 5.5 L14 10z"/>
    <path d="M28 1 L20 5.5 L28 10z"/><rect x="29.5" y="1" width="1.6" height="9"/>
    <path d="M37.5 1 L46.5 5.5 L37.5 10z"/>
    <rect x="54" y="1" width="1.6" height="9"/><path d="M57 1 L65 5.5 L57 10z"/>
    <path d="M71 1 L79.5 5.5 L71 10z"/><rect x="80.5" y="1" width="1.6" height="9"/>
  </g>
  <rect x="88" y="0" width="1" height="11" fill="#b0b0b0"/>
  <rect x="96.5" y="0" width="1.3" height="11" fill="#e02020"/><circle cx="97.2" cy="5.5" r="1.9" fill="none" stroke="#e02020" stroke-width="1.2"/>
  <path d="M110 2.5 H106.5 Q104 2.5 104 5 Q104 7.5 106.5 7.5 H116" stroke="#333" stroke-width="1.8" fill="none"/><path d="M115 4 L119 7.5 L115 11z" fill="#333"/>
  <rect x="123" y="0" width="1" height="11" fill="#b0b0b0"/>
  <rect x="128.5" y="1" width="6" height="6" fill="#c8c8e4" stroke="#6a6aa8" stroke-width="0.8"/><rect x="131.5" y="4" width="6.5" height="6.5" fill="#8e8ed0" stroke="#4e4e9a" stroke-width="0.9"/>
  <rect x="142.5" y="1" width="6" height="6" fill="#fff" stroke="#8a8ac0" stroke-width="0.8"/><rect x="145.5" y="4" width="6.5" height="6.5" fill="#fff" stroke="#4e4e9a" stroke-width="1"/>
  <rect x="156.5" y="1" width="6" height="6" fill="#a0a0d4" stroke="#6a6aa8" stroke-width="0.8"/><rect x="159.5" y="4" width="6.5" height="6.5" fill="#8e8ed0" stroke="#4e4e9a" stroke-width="0.9"/>
  <path d="M172 1 H170.5 V10 H172 M178.5 1 H180 V10 H178.5" stroke="#5a5aa0" stroke-width="1.2" fill="none"/><circle cx="175.2" cy="5.5" r="0.9" fill="#333"/><path d="M178 10 L181 7 V10z" fill="#111"/>
  <rect x="184.5" y="0" width="1" height="11" fill="#b8b8b8"/>
  <text x="194.5" y="9" font-size="10.5" fill="#3a7cc8">7</text>
  <rect x="194" y="10" width="6" height="1" fill="#6aa0d8" opacity="0.7"/>
  <text x="225" y="9" font-size="10" letter-spacing="-0.4" fill="#3a7cc8">24.00</text>
  <rect x="225" y="10" width="23" height="1" fill="#6aa0d8" opacity="0.7"/>
  <text x="251" y="9" font-size="10.5" fill="#222">fps</text>
  <text x="271" y="9" font-size="10" letter-spacing="-0.3" fill="#3a7cc8">0.3</text>
  <rect x="271" y="10" width="13" height="1" fill="#6aa0d8" opacity="0.7"/>
  <text x="286" y="9" font-size="10.5" fill="#222">s</text>
</svg>
<!-- TL H SCROLLBAR -->
<div class="a" style="left:469px;top:732px;width:391px;height:12px;background:linear-gradient(#bcbcbc,#cacaca);border-left:1px solid #8a8a8a;border-top:1px solid #a0a0a0"></div>
<div class="a" style="left:483px;top:733px;width:54px;height:11px;background:linear-gradient(#f2f2f2,#dedede);border-left:1px solid #a4a4a4;border-right:1px solid #a4a4a4"></div>
<svg class="a" style="left:472px;top:734px" width="8" height="9" viewBox="0 0 8 9"><path d="M6 0.5 L1.5 4.5 L6 8.5z" fill="#222"/></svg>
<svg class="a" style="left:850px;top:734px" width="8" height="9" viewBox="0 0 8 9"><path d="M2 0.5 L6.5 4.5 L2 8.5z" fill="#222"/></svg>

<!-- PANEL COLUMN FRAME -->
<div class="a" style="left:872px;top:54px;width:3px;height:691px;background:#6e6e6e"></div>
<div class="a" style="left:875px;top:54px;width:325px;height:11px;background:linear-gradient(#c4c4c4 0,#c4c4c4 1px,#a8a8a8 2px,#989898);border-bottom:1px solid #7e7e7e"></div>
<svg class="a" style="left:897px;top:56px" width="10" height="7" viewBox="0 0 10 7"><path d="M4.5 0.5 L1 3.5 L4.5 6.5z M9 0.5 L5.5 3.5 L9 6.5z" fill="#444"/></svg>
<svg class="a" style="left:1161px;top:56px" width="10" height="7" viewBox="0 0 10 7"><path d="M1 0.5 L4.5 3.5 L1 6.5z M5.5 0.5 L9 3.5 L5.5 6.5z" fill="#444"/></svg>
<svg class="a" style="left:1187px;top:56px" width="10" height="7" viewBox="0 0 10 7"><path d="M1 0.5 L4.5 3.5 L1 6.5z M5.5 0.5 L9 3.5 L5.5 6.5z" fill="#444"/></svg>
<!-- ICON COLUMN -->
<div class="a" style="left:875px;top:65px;width:34px;height:680px;background:#d8d8d8;border-left:1px solid #ececec"></div>
<div class="a" style="left:909px;top:65px;width:3px;height:680px;background:#6e6e6e"></div>
<div class="a" style="left:875px;top:65px;width:34px;height:1px;background:#f4f4f4"></div>
<div class="a" style="left:875px;top:129px;width:34px;height:2px;background:#8a8a8a;border-bottom:1px solid #f0f0f0"></div>
<div class="a" style="left:875px;top:220px;width:34px;height:2px;background:#8a8a8a;border-bottom:1px solid #f0f0f0"></div>
<div class="a" style="left:875px;top:311px;width:34px;height:2px;background:#8a8a8a;border-bottom:1px solid #f0f0f0"></div>
<div class="a" style="left:875px;top:350px;width:34px;height:2px;background:#8a8a8a;border-bottom:1px solid #f0f0f0"></div>
<div class="a" style="left:883px;top:69px;width:18px;height:3px;background:repeating-linear-gradient(90deg,#8a8a8a 0 1px,transparent 1px 2px)"></div>
<div class="a" style="left:883px;top:135px;width:18px;height:3px;background:repeating-linear-gradient(90deg,#8a8a8a 0 1px,transparent 1px 2px)"></div>
<div class="a" style="left:883px;top:226px;width:18px;height:3px;background:repeating-linear-gradient(90deg,#8a8a8a 0 1px,transparent 1px 2px)"></div>
<div class="a" style="left:883px;top:317px;width:18px;height:3px;background:repeating-linear-gradient(90deg,#8a8a8a 0 1px,transparent 1px 2px)"></div>
<!-- color palette -->
<svg class="a" style="left:884px;top:79px" width="19" height="16" viewBox="0 0 19 16"><defs><radialGradient id="gp" cx="40%" cy="30%" r="80%"><stop offset="0" stop-color="#777"/><stop offset="1" stop-color="#141414"/></radialGradient></defs><path d="M2 10 Q0 4 8 1.5 Q17 -0.5 18 5 Q18.5 8 14 8.5 Q11 9 12.5 11.5 Q13 14.5 8 14.5 Q3.5 14.5 2 10z" fill="url(#gp)"/><circle cx="6" cy="5.5" r="1.6" fill="#eee"/><circle cx="10.5" cy="4" r="1.6" fill="#eee"/><circle cx="14.5" cy="4" r="1.3" fill="#eee"/><circle cx="5" cy="10" r="1.6" fill="#eee"/><circle cx="9" cy="11.5" r="1.6" fill="#eee"/></svg>
<!-- swatches -->
<svg class="a" style="left:885px;top:107px" width="16" height="13" viewBox="0 0 16 13"><rect x="0" y="0" width="16" height="13" fill="#222"/><g fill="#666"><rect x="1" y="1" width="2.5" height="2.5"/><rect x="4.5" y="1" width="2.5" height="2.5" fill="#888"/><rect x="8" y="1" width="2.5" height="2.5" fill="#999"/><rect x="11.5" y="1" width="3" height="2.5" fill="#fff"/><rect x="1" y="5" width="2.5" height="2.5" fill="#555"/><rect x="4.5" y="5" width="2.5" height="2.5" fill="#777"/><rect x="8" y="5" width="2.5" height="2.5" fill="#aaa"/><rect x="11.5" y="5" width="3" height="2.5" fill="#fff"/><rect x="1" y="9" width="2.5" height="3" fill="#666"/><rect x="4.5" y="9" width="2.5" height="3" fill="#ddd"/><rect x="8" y="9" width="2.5" height="3" fill="#fff"/><rect x="11.5" y="9" width="3" height="3" fill="#eee"/></g></svg>
<!-- align -->
<svg class="a" style="left:885px;top:144px" width="16" height="16" viewBox="0 0 16 16"><rect x="1" y="0.5" width="1.5" height="15" fill="#222"/><rect x="3.5" y="2" width="7" height="5" fill="#8a8a8a"/><rect x="3.5" y="9" width="12" height="5" fill="#1e1e1e"/></svg>
<!-- info -->
<svg class="a" style="left:884px;top:170px" width="17" height="17" viewBox="0 0 17 17"><defs><radialGradient id="gi" cx="40%" cy="30%" r="75%"><stop offset="0" stop-color="#8a8a8a"/><stop offset="1" stop-color="#1a1a1a"/></radialGradient></defs><circle cx="8.5" cy="8.5" r="8" fill="url(#gi)"/><circle cx="8.5" cy="4.5" r="1.5" fill="#fff"/><path d="M6.5 7 H9.8 V12.5 H11 V13.8 H6.3 V12.5 H7.5 V8.3 H6.5z" fill="#fff"/></svg>
<!-- transform -->
<svg class="a" style="left:885px;top:197px" width="15" height="15" viewBox="0 0 15 15"><rect x="2.5" y="2.5" width="10" height="10" fill="#f4f4f4" stroke="#222" stroke-width="1.5" stroke-dasharray="1.5 1"/><g fill="#111"><rect x="1" y="1" width="3" height="3"/><rect x="11" y="1" width="3" height="3"/><rect x="1" y="11" width="3" height="3"/><rect x="11" y="11" width="3" height="3"/></g></svg>
<!-- code snippets -->
<svg class="a" style="left:884px;top:234px" width="18" height="17" viewBox="0 0 18 17" font-family="Liberation Sans"><rect x="6.5" y="0.5" width="10" height="13" fill="#fff" stroke="#333" stroke-width="1"/><path d="M8.5 3.5 H14.5 M8.5 6 H14.5 M8.5 8.5 H14.5 M10.5 11 H14.5" stroke="#444" stroke-width="1"/><path d="M3.5 7 Q2 7 2 8.5 V10.5 Q2 11.5 0.8 11.8 Q2 12.1 2 13.1 V15 Q2 16.5 3.5 16.5 M6.5 7 Q8 7 8 8.5 V10.5 Q8 11.5 9.2 11.8 Q8 12.1 8 13.1 V15 Q8 16.5 6.5 16.5" fill="none" stroke="#111" stroke-width="1.5"/></svg>
<!-- components -->
<svg class="a" style="left:885px;top:260px" width="16" height="17" viewBox="0 0 16 17"><path d="M4 4 L8 2 L12 4 L12 9 L8 11 L4 9z" fill="#f0f0f0" stroke="#333" stroke-width="0.9"/><path d="M0.5 9 L4.5 7 L8.5 9 L8.5 14 L4.5 16 L0.5 14z" fill="#555" stroke="#222" stroke-width="0.9"/><path d="M7.5 9 L11.5 7 L15.5 9 L15.5 14 L11.5 16 L7.5 14z" fill="#ccc" stroke="#222" stroke-width="0.9"/><path d="M0.5 9 L4.5 11 L8.5 9 M4.5 11 V16 M7.5 9 L11.5 11 L15.5 9 M11.5 11 V16" stroke="#222" stroke-width="0.8" fill="none"/></svg>
<!-- motion presets -->
<svg class="a" style="left:884px;top:286px" width="18" height="18" viewBox="0 0 18 18"><circle cx="4.8" cy="12.5" r="3.3" fill="#4e4e4e"/><circle cx="10.2" cy="8.5" r="2.2" fill="#6a6a6a"/><circle cx="14" cy="4" r="1.7" fill="#aaa" stroke="#555" stroke-width="0.7"/></svg>
<!-- project -->
<svg class="a" style="left:883px;top:325px" width="21" height="17" viewBox="0 0 21 17"><path d="M0.5 0.5 H6 L3.2 3.5z" fill="#222"/><path d="M6 3.5 H10 L11 5 H19.5 V12.5 H6z" fill="#eee" stroke="#333" stroke-width="1"/><g fill="#fff" stroke="#222" stroke-width="0.9"><rect x="8" y="13" width="3" height="3"/><rect x="12" y="13" width="3" height="3"/><rect x="16" y="13" width="3" height="3"/></g></svg>

<!-- PROPERTIES PANEL -->
<div class="a" style="left:912px;top:65px;width:261px;height:17px;background:linear-gradient(#b0b0b0,#a0a0a0);border-top:1px solid #c8c8c8;border-bottom:1px solid #f0f0f0;box-shadow:inset 0 -1px 0 #8e8e8e"></div>
<div class="a" style="left:912px;top:65px;width:62px;height:17px;background:linear-gradient(#e6e6e6,#d8d8d8)"></div>
<div class="a" style="left:974px;top:65px;width:46px;height:16px;background:linear-gradient(#b6b6b6,#a6a6a6);border-right:1px solid #828282;border-left:1px solid #9a9a9a;border-bottom:1px solid #8e8e8e;border-top:1px solid #cacaca"></div>
<div class="t" style="left:919px;top:68px;font-size:11px;color:#1a1a1a;-webkit-text-stroke:0.35px #1a1a1a">Properties</div>
<div class="t" style="left:981px;top:68px;font-size:11px;color:#1a1a1a;-webkit-text-stroke:0.35px #1a1a1a">Library</div>
<svg class="a" style="left:1154px;top:68px" width="15" height="9" viewBox="0 0 15 9"><path d="M0 3 L5 3 L2.5 6z" fill="#333"/><rect x="6" y="0.5" width="8" height="1" fill="#444"/><rect x="6" y="2.8" width="8" height="1" fill="#444"/><rect x="6" y="5.1" width="8" height="1" fill="#444"/><rect x="6" y="7.4" width="8" height="1" fill="#444"/></svg>
<div class="a" style="left:912px;top:81px;width:261px;height:664px;background:#d8d8d8"></div>
<!-- doc header -->
<div class="a" style="left:929px;top:94px;width:34px;height:34px;background:#fff;border-left:2px solid #222;border-top:2px solid #222"></div>
<div class="t" style="left:939px;top:101px;font-size:19px;color:#4e4e4e;-webkit-text-stroke:0.5px #4e4e4e">Fl</div>
<div class="t" style="left:981px;top:94px;font-size:11px;color:#222">Document</div>
<div class="t" style="left:981px;top:121px;font-size:11.5px;color:#222">chapter-18.fla</div>
<div class="a" style="left:912px;top:140px;width:261px;height:1px;background:#8c8c8c"></div>
<!-- PUBLISH -->
<div class="a" style="left:912px;top:141px;width:261px;height:16px;background:#cdcdcd"></div>
<svg class="a" style="left:916px;top:147px" width="11" height="7" viewBox="0 0 11 7"><path d="M0.7 0.7 H10.3 L5.5 6.3z" fill="#eee" stroke="#555" stroke-width="1"/></svg>
<div class="t" style="left:931px;top:145px;font-size:10px;font-weight:bold;color:#222;letter-spacing:-0.6px;-webkit-text-stroke:0">PUBLISH</div>
<div class="t" style="left:941px;top:167px;font-size:11px;color:#222">Profile:</div>
<div class="t" style="left:981px;top:167px;font-size:11px;color:#222">Default</div>
<div class="a" style="left:981px;top:183px;width:112px;height:17px;background:linear-gradient(#fafafa,#e2e2e2);border:1px solid #8e8e8e;border-radius:2px"></div>
<div class="t" style="left:988px;top:186px;font-size:11px;color:#222">Publish Settings...</div>
<div class="a" style="left:912px;top:205px;width:261px;height:1px;background:#bdbdbd;box-shadow:0 1px 0 #ececec"></div>
<div class="t" style="left:940px;top:214px;font-size:11px;color:#222">Target:</div>
<div class="a" style="left:981px;top:212px;width:153px;height:17px;background:linear-gradient(#fafafa,#e0e0e0);border:1px solid #8e8e8e;border-radius:2px"></div>
<div class="t" style="left:988px;top:215px;font-size:11px;color:#222">Flash Player 11.2</div>
<div class="a" style="left:1116px;top:215px;width:1px;height:11px;background:#666"></div>
<svg class="a" style="left:1121px;top:218px" width="8" height="5" viewBox="0 0 8 5"><path d="M0 0 H8 L4 5z" fill="#222"/></svg>
<div class="t" style="left:944px;top:241px;font-size:11px;color:#222">Script:</div>
<div class="a" style="left:981px;top:239px;width:153px;height:17px;background:linear-gradient(#fafafa,#e0e0e0);border:1px solid #8e8e8e;border-radius:2px"></div>
<div class="t" style="left:988px;top:242px;font-size:11px;color:#222">ActionScript 3.0</div>
<div class="a" style="left:1116px;top:242px;width:1px;height:11px;background:#666"></div>
<svg class="a" style="left:1121px;top:245px" width="8" height="5" viewBox="0 0 8 5"><path d="M0 0 H8 L4 5z" fill="#222"/></svg>
<svg class="a" style="left:1143px;top:240px" width="14" height="14" viewBox="0 0 14 14"><circle cx="4.6" cy="4.6" r="3.9" fill="#464646"/><path d="M0.8 0.8 L4.4 4.4" stroke="#d8d8d8" stroke-width="2.6"/><circle cx="4.4" cy="4.4" r="1" fill="#d8d8d8"/><path d="M5.5 5.5 L12.3 12.3" stroke="#464646" stroke-width="2.8" stroke-linecap="round"/></svg>
<div class="a" style="left:912px;top:262px;width:261px;height:1px;background:#bdbdbd;box-shadow:0 1px 0 #ececec"></div>
<div class="t" style="left:946px;top:274px;font-size:11px;color:#222">Class:</div>
<div class="a" style="left:981px;top:272px;width:154px;height:17px;background:#fff;border:1px solid #8e8e8e;border-top-color:#6e6e6e;border-radius:2px"></div>
<svg class="a" style="left:1142px;top:272px" width="16" height="16" viewBox="0 0 16 16"><path d="M2 14 L3 10.5 L12 1.5 L14.5 4 L5.5 13z" fill="#f6f6f6" stroke="#444" stroke-width="1.1"/><path d="M2 14 L3.2 12.8" stroke="#000" stroke-width="1.8"/><path d="M10.5 3 L13 5.5" stroke="#555" stroke-width="1"/></svg>
<!-- PROPERTIES -->
<div class="a" style="left:912px;top:299px;width:261px;height:16px;background:#cdcdcd"></div>
<svg class="a" style="left:916px;top:305px" width="11" height="7" viewBox="0 0 11 7"><path d="M0.7 0.7 H10.3 L5.5 6.3z" fill="#eee" stroke="#555" stroke-width="1"/></svg>
<div class="t" style="left:931px;top:303px;font-size:10px;font-weight:bold;color:#222;letter-spacing:-0.6px;-webkit-text-stroke:0">PROPERTIES</div>
<div class="t" style="left:955px;top:324px;font-size:11px;color:#222">FPS:</div>
<div class="a" style="left:984px;top:322px;width:89px;height:17px;background:#fff;border:2px solid #6aa4e0;border-radius:1px;box-shadow:0 0 0 0.5px #9cc4ec"></div>
<div class="t" style="left:988px;top:325px;font-size:11px;color:#222">12</div>
<div class="a" style="left:1000px;top:324px;width:1px;height:12px;background:#222"></div>
<div class="a" style="left:912px;top:344px;width:261px;height:1px;background:#bdbdbd;box-shadow:0 1px 0 #ececec"></div>
<div class="t" style="left:952px;top:352px;font-size:11px;color:#222">Size:</div>
<div class="t" style="left:986px;top:352px;font-size:11px;color:#3a7cc8">550</div>
<div class="a" style="left:986px;top:363px;width:20px;height:1px;background:repeating-linear-gradient(90deg,#5a9ad8 0 1px,transparent 1px 2px)"></div>
<div class="t" style="left:1024px;top:352px;font-size:11px;color:#222">x</div>
<div class="t" style="left:1046px;top:352px;font-size:11px;color:#3a7cc8">400</div>
<div class="a" style="left:1046px;top:363px;width:20px;height:1px;background:repeating-linear-gradient(90deg,#5a9ad8 0 1px,transparent 1px 2px)"></div>
<div class="t" style="left:1089px;top:352px;font-size:11px;color:#222">px</div>
<svg class="a" style="left:1140px;top:350px" width="14" height="14" viewBox="0 0 14 14"><circle cx="4.6" cy="4.6" r="3.9" fill="#464646"/><path d="M0.8 0.8 L4.4 4.4" stroke="#d8d8d8" stroke-width="2.6"/><circle cx="4.4" cy="4.4" r="1" fill="#d8d8d8"/><path d="M5.5 5.5 L12.3 12.3" stroke="#464646" stroke-width="2.8" stroke-linecap="round"/></svg>
<div class="a" style="left:912px;top:368px;width:261px;height:1px;background:#bdbdbd;box-shadow:0 1px 0 #ececec"></div>
<div class="t" style="left:945px;top:379px;font-size:11px;color:#222">Stage:</div>
<div class="a" style="left:984px;top:376px;width:29px;height:14px;background:#fff;border:1px solid #555"></div>
<!-- SWF HISTORY -->
<div class="a" style="left:912px;top:405px;width:261px;height:16px;background:#cdcdcd"></div>
<svg class="a" style="left:916px;top:411px" width="11" height="7" viewBox="0 0 11 7"><path d="M0.7 0.7 H10.3 L5.5 6.3z" fill="#eee" stroke="#555" stroke-width="1"/></svg>
<div class="t" style="left:931px;top:409px;font-size:10px;font-weight:bold;color:#222;letter-spacing:-0.3px;-webkit-text-stroke:0">SWF HISTORY</div>
<div class="a" style="left:959px;top:425px;width:35px;height:17px;background:linear-gradient(#e8e8e8,#d6d6d6);border:1px solid #a8a8a8;border-radius:2px"></div>
<div class="t" style="left:967px;top:428px;font-size:11px;color:#8e8e8e">Log</div>
<div class="a" style="left:1067px;top:425px;width:45px;height:17px;background:linear-gradient(#fafafa,#e0e0e0);border:1px solid #8e8e8e;border-radius:2px"></div>
<div class="t" style="left:1076px;top:428px;font-size:11px;color:#222">Clear</div>
<div class="t" style="left:961px;top:450px;font-size:11px;color:#222">982 B</div>
<div class="t" style="left:1007px;top:450px;font-size:11px;color:#222;letter-spacing:0.8px">2/12/13</div>
<div class="t" style="left:1066px;top:450px;font-size:11px;color:#222">2:52 PM</div>
<div class="t" style="left:961px;top:469px;font-size:11px;color:#222">774 B</div>
<div class="t" style="left:1007px;top:469px;font-size:11px;color:#222;letter-spacing:0.8px">2/12/13</div>
<div class="t" style="left:1066px;top:469px;font-size:11px;color:#222">2:45 PM</div>

<!-- TOOLS -->
<div class="a" style="left:1173px;top:65px;width:3px;height:680px;background:#6e6e6e"></div>
<div class="a" style="left:1176px;top:65px;width:22px;height:16px;background:linear-gradient(#b0b0b0,#a0a0a0);border-bottom:1px solid #f0f0f0"></div>
<div class="a" style="left:1176px;top:82px;width:22px;height:663px;background:#dcdcdc"></div>
<div class="a" style="left:1198px;top:54px;width:2px;height:691px;background:#6a6a6a"></div>
<svg class="a" style="left:1176px;top:82px" width="22" height="600" viewBox="0 0 22 600">
<defs>
<linearGradient id="gsel" x1="0" y1="0" x2="0" y2="1"><stop offset="0" stop-color="#9c9c9c"/><stop offset="1" stop-color="#b0b0b0"/></linearGradient>
<radialGradient id="gsph" cx="40%" cy="35%" r="70%"><stop offset="0" stop-color="#ffffff"/><stop offset="0.5" stop-color="#c4c4c4"/><stop offset="1" stop-color="#505050"/></radialGradient>
<linearGradient id="grect" x1="0" y1="0" x2="1" y2="1"><stop offset="0" stop-color="#fafafa"/><stop offset="1" stop-color="#9a9a9a"/></linearGradient>
</defs>
<!-- separators (y local = page-82) -->
<g fill="#b4b4b4"><rect x="0" y="111.5" width="22" height="1"/><rect x="0" y="265.5" width="22" height="1"/><rect x="0" y="356.5" width="22" height="1"/><rect x="0" y="405" width="22" height="1"/><rect x="0" y="524" width="22" height="1"/></g>
<g fill="#f4f4f4"><rect x="0" y="112.5" width="22" height="1"/><rect x="0" y="266.5" width="22" height="1"/><rect x="0" y="357.5" width="22" height="1"/><rect x="0" y="406" width="22" height="1"/><rect x="0" y="525" width="22" height="1"/></g>
<!-- 1 selection (selected) -->
<rect x="1.5" y="4.5" width="19" height="17" fill="url(#gsel)" stroke="#6e6e6e" stroke-width="1"/>
<path d="M6.5 6.5 L6.5 18 L9 15.5 L11 19.5 L12.8 18.6 L10.8 14.8 L14 14.6z" fill="#111"/>
<!-- 2 subselection -->
<path d="M6.5 28 L6.5 39.5 L9 37 L11 41 L12.8 40.1 L10.8 36.3 L14 36.1z" fill="#fff" stroke="#111" stroke-width="1"/>
<path d="M9.5 37.5 L11 41 L12.8 40.1 L11.2 36.8z" fill="#111"/>
<!-- 3 free transform -->
<g fill="#111"><rect x="3.5" y="49" width="2" height="2"/><rect x="7.5" y="49" width="2" height="2"/><rect x="11.5" y="49" width="2" height="2"/><rect x="15.5" y="49" width="2" height="2"/><rect x="15.5" y="53" width="2" height="2"/><rect x="15.5" y="57" width="2" height="2"/><rect x="15.5" y="61" width="2" height="2"/><rect x="11.5" y="61" width="2" height="2"/><rect x="7.5" y="61" width="2" height="2"/><rect x="3.5" y="61" width="2" height="2"/><rect x="3.5" y="53" width="2" height="2"/></g>
<path d="M3 52 L3 61 L5.5 58.5 L9 60.5 L9.5 59 L6.5 57 L10 56z" fill="#1a1a1a"/>
<path d="M17.5 64.5 L20.5 64.5 L20.5 67.5z" fill="#111"/>
<!-- 4 3D rotation -->
<circle cx="10.5" cy="77" r="6.2" fill="url(#gsph)" stroke="#555" stroke-width="0.5"/>
<path d="M3.5 74.5 Q1 79 5 82 Q10 85.5 16 82.5 Q19.5 80 17.5 75.5" fill="none" stroke="#1a1a1a" stroke-width="1.5"/>
<path d="M18 84 L21 84 L21 87z" fill="#111"/>
<!-- 5 lasso -->
<ellipse cx="12" cy="96.5" rx="7.5" ry="4" fill="none" stroke="#222" stroke-width="1.2" transform="rotate(-12 12 96.5)"/>
<path d="M6 99 Q3 101 5 103 Q7 104.5 5.5 106.5" stroke="#222" stroke-width="1.1" fill="none"/>
<!-- 6 pen -->
<path d="M11 116 L7 124 L8 129 H14 L15 124z" fill="#fff" stroke="#111" stroke-width="1.1"/>
<path d="M11 119 V125" stroke="#111" stroke-width="1"/><circle cx="11" cy="125" r="1" fill="#111"/>
<rect x="7.5" y="129" width="7" height="3" fill="#111"/>
<path d="M18 128.5 L21 128.5 L21 131.5z" fill="#111"/>
<!-- 7 text -->
<text x="3.5" y="152.5" font-family="Liberation Serif" font-size="18" font-weight="bold" fill="#111">T</text>
<!-- 8 line -->
<path d="M4.5 162 L16.5 173" stroke="#111" stroke-width="1.4"/>
<!-- 9 rect -->
<rect x="4.5" y="184" width="13" height="10.5" rx="1" fill="url(#grect)" stroke="#333" stroke-width="1"/>
<path d="M18 193.5 L21 193.5 L21 196.5z" fill="#111"/>
<!-- 10 pencil -->
<path d="M4 217.5 L5 213.5 L15 204 L18 207 L8.2 216.5z" fill="#f2f2f2" stroke="#333" stroke-width="1.1"/>
<path d="M4 217.5 L5.5 216" stroke="#000" stroke-width="1.8"/>
<!-- 11 brush -->
<path d="M18.5 225 L11 232" stroke="#333" stroke-width="2"/>
<path d="M11.5 231.5 Q7.5 230 5 234 Q4 236.5 3.5 238.5 Q9 238.5 11 235.5 Q12.5 233.5 11.5 231.5z" fill="#e8e8e8" stroke="#222" stroke-width="1.1"/>
<path d="M18 237.5 L21 237.5 L21 240.5z" fill="#111"/>
<!-- 12 deco -->
<path d="M3 253 Q2 247 8 246.5" stroke="#222" stroke-width="1.3" fill="none" stroke-dasharray="1.3 1.3"/>
<path d="M3.5 254 Q6 258 9 257" stroke="#222" stroke-width="1.3" fill="none" stroke-dasharray="1.3 1.3"/>
<path d="M8 256 L17.5 248 L19.5 250.5 L10 258.5 L7 259z" fill="#f4f4f4" stroke="#222" stroke-width="1"/>
<!-- 13 bone -->
<path d="M5.5 282 L14 273.5" stroke="#3a3a3a" stroke-width="4.4"/>
<circle cx="3.8" cy="281" r="2.3" fill="#fafafa" stroke="#3a3a3a" stroke-width="1"/><circle cx="6.5" cy="283.8" r="2.3" fill="#fafafa" stroke="#3a3a3a" stroke-width="1"/>
<circle cx="13" cy="271.8" r="2.3" fill="#fafafa" stroke="#3a3a3a" stroke-width="1"/><circle cx="15.8" cy="274.5" r="2.3" fill="#fafafa" stroke="#3a3a3a" stroke-width="1"/>
<path d="M5.5 282 L14 273.5" stroke="#fafafa" stroke-width="2.4"/>
<circle cx="4.3" cy="281.5" r="1.5" fill="#fafafa"/><circle cx="6" cy="283.3" r="1.5" fill="#fafafa"/><circle cx="13.5" cy="272.3" r="1.5" fill="#fafafa"/><circle cx="15.3" cy="274" r="1.5" fill="#fafafa"/>
<path d="M18 284.5 L21 284.5 L21 287.5z" fill="#111"/>
<!-- 14 bucket -->
<path d="M2.5 300 L8.5 295 L15.5 301 L12.5 306.5 Q10 308 8 306.5z" fill="#fff" stroke="#111" stroke-width="1.3"/>
<path d="M8.5 295 L12 298" stroke="#111" stroke-width="1"/>
<path d="M5.5 297 Q7 291.5 11 292 Q14 292.5 15 298" stroke="#111" stroke-width="1" fill="none"/>
<path d="M15.5 301 Q17 302 16.5 306" stroke="#333" stroke-width="1.6" fill="none"/>
<path d="M18 306 L21 306 L21 309z" fill="#111"/>
<!-- 15 eyedropper -->
<path d="M4 329.5 L12 321.5" stroke="#222" stroke-width="2.2"/>
<path d="M4.3 329.2 L11.5 322" stroke="#fafafa" stroke-width="0.9"/>
<path d="M10.5 318.5 L15.5 323.5" stroke="#222" stroke-width="2"/>
<path d="M13 321 L17.5 316.5" stroke="#222" stroke-width="3"/>
<!-- 16 eraser -->
<path d="M3.5 344.5 L8.5 339 H18.5 L13.5 344.5z" fill="#f8f8f8" stroke="#222" stroke-width="1"/>
<path d="M3.5 344.5 V347.5 H13.5 L18.5 342 V339" fill="#bbb" stroke="#222" stroke-width="1"/>
<!-- 17 hand -->
<path d="M6 376 Q3 372 2.5 369 Q2.5 367.5 4 368 L6.5 371 V364 Q6.5 362.5 8 362.5 Q9 362.5 9 364 V369 V362 Q9 361 10.5 361 Q12 361 12 362.5 V369 V363 Q12 362 13.3 362 Q14.5 362 14.5 363.5 V369.5 V365.5 Q14.5 364.5 15.8 364.5 Q17 364.5 17 366 V372 Q17 376 14 376z" fill="#fff" stroke="#222" stroke-width="1.1"/>
<!-- 18 zoom -->
<circle cx="9" cy="389.5" r="4.8" fill="#eaeaea" stroke="#222" stroke-width="1.5"/>
<path d="M12.5 393 L17.5 397.5" stroke="#111" stroke-width="2.5"/>
<!-- 19 stroke pencil -->
<path d="M5 423.5 L6 420 L15 412 L17 414 L8 422.5z" fill="#f4f4f4" stroke="#222" stroke-width="1"/>
<path d="M5 423.5 L6.3 422.2" stroke="#000" stroke-width="1.6"/>
<!-- 20 stroke swatch -->
<rect x="2" y="429" width="18" height="14" fill="#dcdcdc" stroke="#555" stroke-width="1"/>
<!-- 21 fill bucket -->
<path d="M4 458 L9.5 452.5 L15.5 458.5 L10 464z" fill="#fff" stroke="#111" stroke-width="1.3"/>
<path d="M10 451.5 Q12 449.5 14 451.5 L16.5 457.5" stroke="#111" stroke-width="1" fill="none"/>
<path d="M15.5 459 L16 463" stroke="#333" stroke-width="1.5"/>
<!-- 22 fill swatch -->
<rect x="1.8" y="469" width="18" height="14" fill="#ffff00" stroke="#555" stroke-width="1"/>
<!-- 23 b/w -->
<rect x="8" y="494" width="6" height="6" fill="#fff" stroke="#333" stroke-width="1"/>
<rect x="5" y="490.5" width="6" height="6" fill="#111"/>
<!-- 24 swap -->
<rect x="5" y="507" width="4.5" height="4.5" fill="#111"/><rect x="5" y="512.5" width="4.5" height="4.5" fill="#fff" stroke="#333" stroke-width="0.8"/>
<path d="M11.5 507.5 Q16 507.5 16 512 Q16 515.5 12.5 515.5" stroke="#111" stroke-width="1.3" fill="none"/>
<path d="M12 504.5 L10 507.5 L12.5 510z M14 513 L11.5 515.5 L14 518z" fill="#111"/>
<!-- 25 magnet selected -->
<rect x="1.5" y="531.5" width="19" height="17" fill="url(#gsel)" stroke="#6e6e6e" stroke-width="1"/>
<path d="M6 545 V539 A5 5 0 0 1 16 539 V545" stroke="#222" stroke-width="3.2" fill="none"/>
<path d="M6 545 V539 A5 5 0 0 1 16 539 V545" stroke="#d8d8d8" stroke-width="1" fill="none"/>
<g fill="#222"><rect x="4" y="545.5" width="1.5" height="1.5"/><rect x="6.5" y="545.5" width="1.5" height="1.5"/><rect x="14" y="545.5" width="1.5" height="1.5"/><rect x="16.5" y="545.5" width="1.5" height="1.5"/></g>
<!-- 26 smooth -->
<path d="M1.5 557 H7 M5 555 L7.5 557 L5 559" stroke="#8c8c8c" stroke-width="1.1" fill="none"/>
<path d="M16 553.5 Q11 552 11.5 556 Q12 559 14.5 561 Q16.5 564.5 11.5 567" stroke="#8c8c8c" stroke-width="1.4" fill="none"/>
<!-- 27 straighten -->
<path d="M1.5 579 H8 M6 577 L8.5 579 L6 581" stroke="#8c8c8c" stroke-width="1.1" fill="none"/>
<path d="M15.5 574.5 L10 580 L15.5 590" stroke="#8c8c8c" stroke-width="1.4" fill="none"/>
</svg>


</body></html>
